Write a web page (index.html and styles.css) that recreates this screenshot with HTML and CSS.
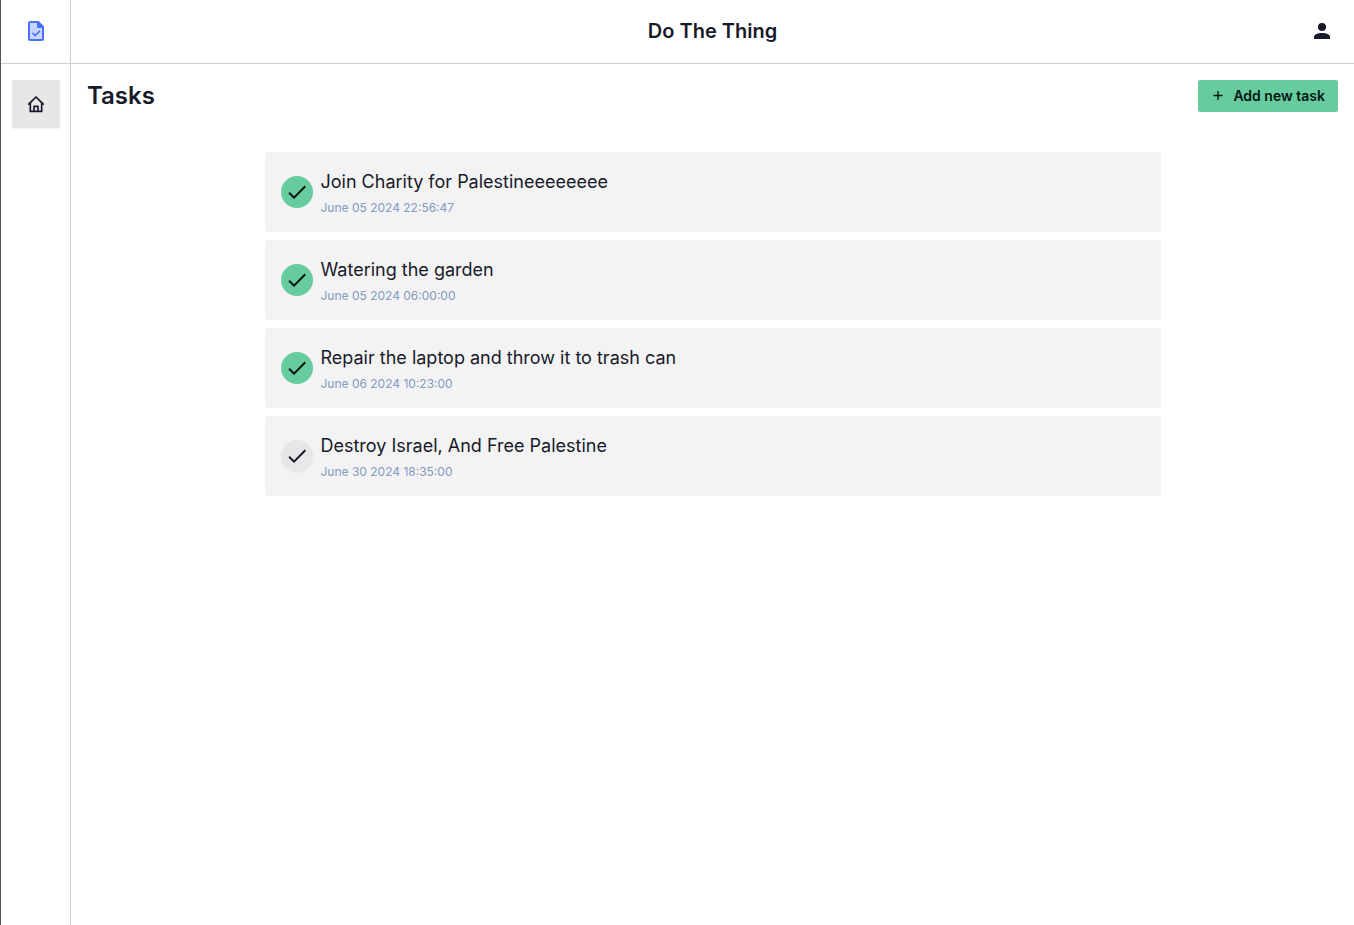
FILE: index.html
```html
<!DOCTYPE html>
<html lang="en">
<head>
<meta charset="utf-8">
<meta name="viewport" content="width=device-width, initial-scale=1">
<title>Do The Thing</title>
<link rel="stylesheet" href="styles.css">
</head>
<body>
<div class="app">
  <aside class="sidebar">
    <a class="logo" href="#" aria-label="Do The Thing">
      <svg width="24" height="24" viewBox="0 0 24 24" fill="none" stroke="#4a72ff" stroke-width="2" stroke-linejoin="round" stroke-linecap="round">
        <path d="M5 4a1 1 0 0 1 1-1h8l5 5v12a1 1 0 0 1-1 1H6a1 1 0 0 1-1-1z" fill="#cad5ff"/>
        <path d="M14 3v5h5z" fill="#4a72ff"/>
        <path d="M8.500 13.800l2.700 2.700 4.700-4.700" stroke-width="1.700" stroke-linecap="butt" stroke-linejoin="miter"/>
      </svg>
    </a>
    <nav class="nav">
      <a class="nav-item" href="#" aria-label="Home">
        <svg width="18" height="18" viewBox="0 0 18 18" fill="none" stroke="currentColor" stroke-width="1.700" stroke-linecap="round" stroke-linejoin="round">
          <path d="M1.700 9.200 9 2l7.300 7.200"/>
          <path d="M3.300 8v8.400h11.400V8"/>
          <path d="M7 16v-4.700h4V16"/>
        </svg>
      </a>
    </nav>
  </aside>
  <div class="page">
    <header class="topbar">
      <h1 class="app-title">Do The Thing</h1>
      <button class="account" type="button" aria-label="Account">
        <svg width="24" height="24" viewBox="0 0 24 24" fill="currentColor">
          <circle cx="12" cy="8" r="4"/>
          <path d="M4 20v-2c0-2.700 4-4 8-4s8 1.300 8 4v2z"/>
        </svg>
      </button>
    </header>
    <main class="content">
      <div class="content-head">
        <h2 class="content-title">Tasks</h2>
        <button class="add" type="button">
          <svg width="24" height="24" viewBox="0 0 24 24" stroke="currentColor" stroke-width="1.300"><path d="M12 8v9M7.500 12.500h9"/></svg>
          Add new task
        </button>
      </div>
      <ul class="tasks">
        <li class="task">
          <button class="check done" type="button" aria-label="Mark as not done"><svg width="24" height="24" viewBox="0 0 24 24" fill="currentColor"><path d="M9 16.200 4.800 12l-1.400 1.400L9 19 21 7l-1.400-1.400z"/></svg></button>
          <div class="task-text"><p class="task-name">Join Charity for Palestineeeeeeee</p><time class="task-time">June 05 2024 22:56:47</time></div>
        </li>
        <li class="task">
          <button class="check done" type="button" aria-label="Mark as not done"><svg width="24" height="24" viewBox="0 0 24 24" fill="currentColor"><path d="M9 16.200 4.800 12l-1.400 1.400L9 19 21 7l-1.400-1.400z"/></svg></button>
          <div class="task-text"><p class="task-name">Watering the garden</p><time class="task-time">June 05 2024 06:00:00</time></div>
        </li>
        <li class="task">
          <button class="check done" type="button" aria-label="Mark as not done"><svg width="24" height="24" viewBox="0 0 24 24" fill="currentColor"><path d="M9 16.200 4.800 12l-1.400 1.400L9 19 21 7l-1.400-1.400z"/></svg></button>
          <div class="task-text"><p class="task-name">Repair the laptop and throw it to trash can</p><time class="task-time">June 06 2024 10:23:00</time></div>
        </li>
        <li class="task">
          <button class="check" type="button" aria-label="Mark as done"><svg width="24" height="24" viewBox="0 0 24 24" fill="currentColor"><path d="M9 16.200 4.800 12l-1.400 1.400L9 19 21 7l-1.400-1.400z"/></svg></button>
          <div class="task-text"><p class="task-name">Destroy Israel, And Free Palestine</p><time class="task-time">June 30 2024 18:35:00</time></div>
        </li>
      </ul>
    </main>
  </div>
</div>
</body>
</html>
```
FILE: styles.css
```css
* { box-sizing: border-box; }
body, h1, h2, p, ul { margin: 0; padding: 0; }
body {
  font-family: Inter, "Liberation Sans", sans-serif;
  color: #181a2a;
  background: #fff;
}
button {
  border: 0;
  padding: 0;
  font: inherit;
  color: inherit;
  background: none;
  cursor: pointer;
}
svg { display: block; }
.app {
  display: flex;
  min-height: 100vh;
  border-left: 1px solid #555;
}
.sidebar {
  flex: none;
  width: 70px;
  border-right: 1px solid #cfcfcf;
}
.logo {
  display: flex;
  align-items: center;
  justify-content: center;
  height: 64px;
  padding-bottom: 1px;
  border-bottom: 1px solid #cfcfcf;
}
.nav {
  display: flex;
  flex-direction: column;
  align-items: center;
  padding: 16px 0;
}
.nav-item {
  display: flex;
  align-items: center;
  justify-content: center;
  width: 48px;
  height: 48px;
  border-radius: 1px;
  background: #e7e7e7;
  color: inherit;
  box-shadow: 0 1px 2px rgba(0, 0, 0, .06);
}
.page { flex: 1; min-width: 0; }
.topbar {
  display: grid;
  grid-template-columns: 1fr auto 1fr;
  align-items: center;
  height: 64px;
  padding: 0 20px 1px;
  border-bottom: 1px solid #cfcfcf;
}
.app-title {
  grid-column: 2;
  font-size: 20px;
  line-height: 28px;
  font-weight: 600;
}
.account { justify-self: end; }
.content { padding: 16px; }
.content-head {
  display: flex;
  align-items: center;
  justify-content: space-between;
}
.content-title {
  font-size: 24px;
  line-height: 32px;
  font-weight: 600;
}
.add {
  display: flex;
  align-items: center;
  gap: 3px;
  height: 32px;
  padding: 0 13px 2px 8px;
  border-radius: 2px;
  background: #66cc9f;
  color: #051510;
  font-size: 14px;
  font-weight: 600;
}
.tasks {
  display: flex;
  flex-direction: column;
  gap: 8px;
  max-width: 896px;
  margin: 40px auto 0;
  list-style: none;
}
.task {
  display: flex;
  align-items: center;
  gap: 8px;
  min-height: 80px;
  padding: 16px;
  border-radius: 4px;
  background: #f3f3f3;
}
.check {
  display: flex;
  align-items: center;
  justify-content: center;
  flex: none;
  width: 32px;
  height: 32px;
  border-radius: 50%;
  background: #e7e7e7;
  box-shadow: 0 1px 2px rgba(0, 0, 0, .04);
}
.check.done {
  background: #66cc9f;
  color: #051510;
  box-shadow: none;
}
.task-name {
  font-size: 18px;
  line-height: 28px;
}
.task-time {
  display: block;
  margin-top: 4px;
  font-size: 12px;
  line-height: 16px;
  color: #829abf;
}
```
